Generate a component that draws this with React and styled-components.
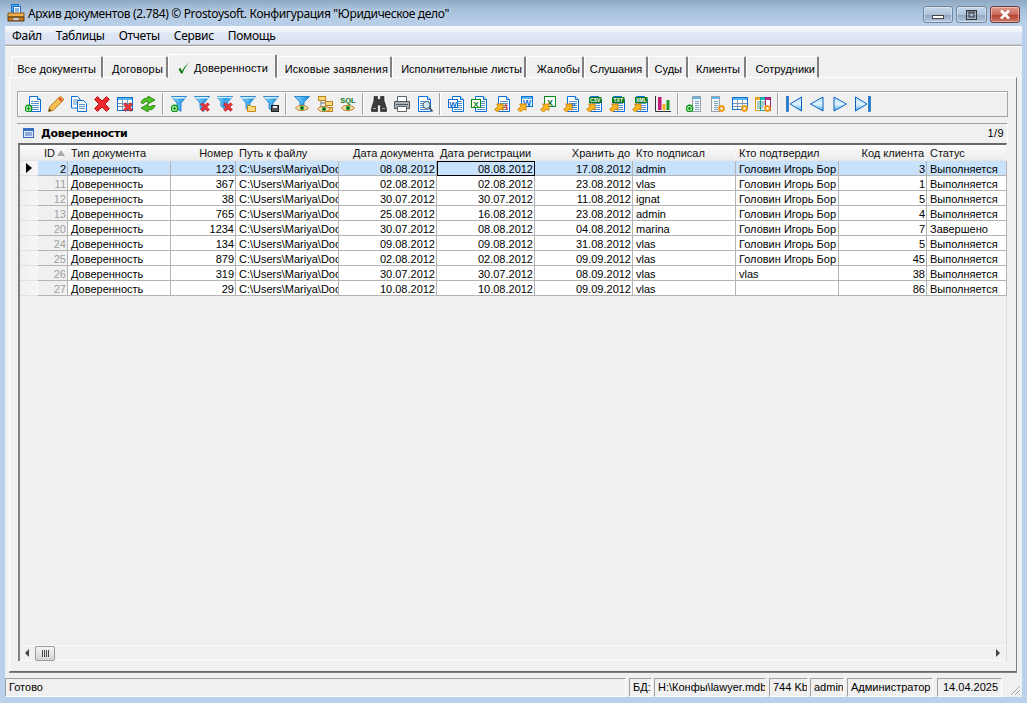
import React from "react";
import styled, { createGlobalStyle } from "styled-components";

const Global = createGlobalStyle`
  html, body { margin: 0; padding: 0; overflow: hidden; }
  body { font-family: "Liberation Sans", Arial, sans-serif; font-size: 11px; color: #000; }
`;

const Win = styled.div`
  width: 1027px; height: 703px; display: flex; flex-direction: column;
  background: #b9d1ea; box-sizing: border-box;
`;
const TitleBar = styled.div`
  height: 26px; flex: none; display: flex; align-items: center; padding: 0 7px 0 7px;
  background: linear-gradient(#8fa8c2, #a9c2dc 40%, #b9d1ea);
`;
const TitleText = styled.span`
  font: 12px "Noto Sans", "Liberation Sans", sans-serif; margin-left: 3px; color: #000; white-space: nowrap;
  text-shadow: 0 0 6px rgba(255,255,255,.6); letter-spacing: -0.34px;
`;
const WinButtons = styled.div`
  margin-left: auto; display: flex; gap: 3px; align-self: flex-start; margin-top: 6px;
`;
const WinBtn = styled.div`
  width: ${p => p.$w}px; height: 17px; box-sizing: border-box; border: 1px solid ${p => p.$close ? "#6e3a3a" : "#71859e"};
  border-radius: 3px; display: flex; align-items: center; justify-content: center;
  background: ${p => p.$close ? "linear-gradient(#e09a8c, #c8695a 50%, #b5402f 55%, #cc7a68)" : "linear-gradient(#c8d8ea, #aec3da 50%, #8fa8c4 55%, #b4c8de)"};
  box-shadow: inset 0 0 0 1px rgba(255,255,255,.4);
`;
const Client = styled.div`
  flex: 1; min-height: 0; margin: 0 5px 6px; background: #f0f0f0; display: flex; flex-direction: column;
`;
const MenuBar = styled.div`
  height: 18px; flex: none; display: flex; align-items: center; padding-left: 7px; gap: 14px;
  background: linear-gradient(#f7f9fd, #eef2fa 30%, #dfe6f4 40%, #dbe3f3);
  border-bottom: 1px solid #c8d0de;
  font: 12px "Noto Sans", "Liberation Sans", sans-serif; letter-spacing: -0.3px;
`;
const Rule = styled.div`
  height: 2px; flex: none; background: #ffffff; border-top: 1px solid #a8a8a0; box-sizing: border-box;
`;
const Body = styled.div`
  flex: 1; min-height: 0; padding: 8px 5px 6px 4px; display: flex; flex-direction: column;
`;
const Tabs = styled.div`
  display: flex; height: 23px; flex: none; padding-left: 2px; align-items: flex-end; position: relative; z-index: 1; margin-bottom: -1px;
`;
const Tab = styled.div`
  width: ${p => p.$w}px; height: ${p => p.$active ? 24 : 22}px; box-sizing: border-box; flex: none;
  display: flex; align-items: center; justify-content: flex-end; white-space: nowrap;
  background: #f0f0f0; border-top: 1px solid #fff; border-left: 1px solid #fff; border-right: 2px solid #808080;
  border-radius: 2px 2px 0 0; padding: 3px ${p => p.$pr}px 0 0; gap: 4px; letter-spacing: ${p => p.$ls || 0}px;
  ${p => p.$active ? "border-bottom: 1px solid #f0f0f0;" : "border-bottom:1px solid #fff;"}
`;
const Panel = styled.div`
  flex: 1; min-height: 0; box-sizing: border-box; display: flex; flex-direction: column;
  border: 1px solid; border-color: #fff #808080 #696969 #fff; box-shadow: 0 1px 0 #808080;
  padding: 13px 8px 10px 7px;
`;
const Toolbar = styled.div`
  height: 26px; flex: none; box-sizing: border-box; display: flex; align-items: center; padding-left: 3px;
  border: 1px solid #a6a69e; box-shadow: inset 1px 1px 0 #fff;
`;
const Tool = styled.div`
  width: 23px; height: 22px; flex: none; display: flex; align-items: center; justify-content: center;
`;
const Sep = styled.div`
  width: 8px; height: 22px; flex: none; display: flex; justify-content: center;
  &::after { content: ""; width: 1px; background: #a0a0a0; border-right: 1px solid #fff; }
`;
const Caption = styled.div`
  margin-top: 6px; height: 20px; flex: none; box-sizing: border-box; display: flex; align-items: center;
  padding: 0 3px 1px 6px; border-top: 1px solid #a0a0a0; border-right: 1px solid #fff;
`;
const CaptionTitle = styled.b`
  margin-left: 7px; font: bold 11px "DejaVu Sans", "Liberation Sans", sans-serif; letter-spacing: -0.35px;
`;
const CaptionCount = styled.span` margin-left: auto; letter-spacing: .4px; `;
const GridBox = styled.div`
  flex: 1; min-height: 0; box-sizing: border-box; margin-left: 1px; margin-right: 1px; display: flex; flex-direction: column;
  border-top: 2px solid #696969; border-left: 2px solid #808080; border-right: 1px solid #dcdcdc; background: #f0f0f0;
`;
const Table = styled.div` flex: 1; min-height: 0; `;
const Row = styled.div`
  display: grid; grid-template-columns: 18px 30px 103px 65px 103px 98px 98px 98px 103px 103px 88px 80px; height: 15px;
`;
const HeadRow = styled(Row)` height: 16px; `;
const Head = styled.div`
  display: flex; align-items: center; justify-content: ${p => p.$right ? "flex-end" : "flex-start"};
  padding: 0 ${p => p.$right ? 2 : 2}px 0 3px; white-space: nowrap; overflow: hidden; box-sizing: border-box;
  background: linear-gradient(#fdfdfd, #f4f4f4 50%, #ebebeb); border-bottom: 1px solid #e4e4e4; border-right: 1px solid #f4f4f4; color: #111;
`;
const Cell = styled.div`
  box-sizing: border-box; line-height: 14px; height: 15px; padding: 1px 1px 0 3px; overflow: hidden; white-space: nowrap;
  text-align: ${p => p.$right ? "right" : "left"};
  border-right: 1px solid #b4b4b4; border-bottom: 1px solid #b4b4b4;
  background: ${p => p.$bg || "#fff"}; color: ${p => p.$fg || "#000"};
  ${p => p.$focus ? "outline: 1px solid #000; outline-offset: -1px; background:#c8e2fc;" : ""}
`;
const Indicator = styled.div`
  box-sizing: border-box; height: 15px; display: flex; align-items: center; padding-left: 6px;
  background: linear-gradient(90deg, #f0f0f0, #f6f6f6); border-bottom: 1px solid #e2e2e2;
`;
const Arrow = styled.div`
  width: 0; height: 0; border-left: 6px solid #000; border-top: 5px solid transparent; border-bottom: 5px solid transparent;
`;
const SortMark = styled.span`
  width: 0; height: 0; margin-left: 2px; border-bottom: 6px solid #aaa; border-left: 4px solid transparent; border-right: 4px solid transparent;
`;
const ScrollBar = styled.div`
  height: 16px; flex: none; display: flex; align-items: center; position: relative; background: #f1f1f1;
  border-top: 1px solid #fafafa; border-bottom: 1px solid #fafafa; box-sizing: border-box;
`;
const ScrollArrow = styled.div`
  width: 0; height: 0; border-top: 4px solid transparent; border-bottom: 4px solid transparent;
  ${p => p.$right ? "border-left: 4px solid #444; margin: 0 6px 0 auto;" : "border-right: 4px solid #444; margin-left: 5px;"}
`;
const Thumb = styled.div`
  width: 20px; height: 15px; box-sizing: border-box; margin-left: 6px; border: 1px solid #9a9a9a; border-radius: 2px;
  background: linear-gradient(#f5f5f5, #e4e4e4 50%, #d2d2d2); display: flex; align-items: center; justify-content: center; gap: 1px;
`;
const Grip = styled.i` width: 1px; height: 7px; background: #444; `;
const Status = styled.div`
  height: 19px; flex: none; display: flex; position: relative; background: #f0f0f0;
`;
const StatusCell = styled.div`
  box-sizing: border-box; height: 19px; width: ${p => p.$w}px; margin-left: ${p => p.$gap || 0}px; flex: none; padding-left: ${p => p.$pad ?? 3}px; line-height: 16px; white-space: nowrap; overflow: hidden;
  border-top: 1px solid #a0a0a0; border-left: 1px solid #a0a0a0; border-right: 1px solid #fff; border-bottom: 1px solid #fff;
`;
const StatusGrip = styled.svg` position: absolute; right: 1px; bottom: 1px; `;

/* ---------- icons ---------- */
const I = ({ children }) => <svg width="16" height="16" viewBox="0 0 16 16">{children}</svg>;
const DocShape = ({ x = 3, w = 11 }) => (
  <g>
    <path d={`M${x + .5} .5h${w - 4}l3 3V15.500h-${w - 1}z`} fill="#fff" stroke="#0a6fd6" />
    <path d={`M${x + w - 3.500} .5v3h3`} fill="#bfe0fb" stroke="#0a6fd6" />
    <path d={`M${x + 2} 5.500h${w - 4}M${x + 2} 7.500h${w - 4}M${x + 2} 9.500h${w - 4}M${x + 2} 11.500h${w - 4}M${x + 2} 13.500h${w - 4}`} stroke="#5b93c8" />
  </g>
);
const Plus = ({ x = 0, y = 9 }) => (
  <g transform={`translate(${x} ${y})`}>
    <circle cx="3.500" cy="3.500" r="3.200" fill="#fff" stroke="#0a9a14" strokeWidth="1.400" />
    <path d="M3.500 1.500v4M1.500 3.500h4" stroke="#0a9a14" strokeWidth="1.400" />
  </g>
);
const RedX = ({ x = 8, y = 8, s = 1 }) => (
  <g transform={`translate(${x} ${y}) scale(${s})`}>
    <path d="M.5 2 2 .5 4 2.500 6 .5 7.500 2 5.500 4 7.500 6 6 7.500 4 5.500 2 7.500 .5 6 2.500 4z" fill="#e8343a" stroke="#a91f28" strokeWidth=".5" />
  </g>
);
const FunnelDefs = () => (
  <svg width="0" height="0" style={{ position: "absolute" }}>
    <defs>
      <linearGradient id="fg" x1="0" x2="1" y1="0" y2="0"><stop offset="0" stopColor="#8fd8fb" /><stop offset=".5" stopColor="#4cb2f0" /><stop offset="1" stopColor="#1186dc" /></linearGradient>
      <linearGradient id="tg" x1="0" x2="0" y1="0" y2="1"><stop offset="0" stopColor="#a8dcfa" /><stop offset=".5" stopColor="#e2f4fe" /><stop offset="1" stopColor="#4fa8e8" /></linearGradient>
    </defs>
  </svg>
);
const Funnel = ({ x = 0, scale = 1 }) => (
  <g transform={`translate(${x} 0) scale(${scale})`}>
    <path d="M.5 .5h15L10 7V15.500L6 12.500V7z" fill="url(#fg)" stroke="#1376c4" strokeWidth=".8" />
    <path d="M1.500 1h13v1.500h-13z" fill="#d8f2fe" />
  </g>
);
const Eye = ({ x = 1, y = 8 }) => (
  <g transform={`translate(${x} ${y})`}>
    <path d="M.5 4C3 .5 10 .5 13.500 4 10 7.500 3 7.500 .5 4z" fill="#f9e2b8" stroke="#c07a20" />
    <circle cx="7" cy="4" r="2.300" fill="#2fa43b" />
    <circle cx="7" cy="4" r="1" fill="#103a10" />
  </g>
);
const ArrowBadge = () => (
  <path d="M.5 13.500 4 10 2.500 8H9v6.500L7 13l-3.500 3z" fill="#f8b526" stroke="#c97808" strokeWidth=".8" />
);
const Gear = ({ x = 9, y = 9 }) => (
  <g transform={`translate(${x} ${y})`}>
    <circle cx="3.500" cy="3.500" r="2.300" fill="#fff" stroke="#f09a14" strokeWidth="2" />
    <path d="M3.500 0v1M3.500 6v1M0 3.500h1M6 3.500h1M1 1l.7.7M5.300 5.300 6 6M1 6l.7-.7M5.300 1.700 6 1" stroke="#f09a14" strokeWidth="1.200" />
  </g>
);
const Tag = ({ t, c = "#0b7a18" }) => (
  <g>
    <rect x="3" y="1" width="12.500" height="6" fill={c} />
    <text x="9.250" y="6" fontFamily="Liberation Sans" fontWeight="bold" fontSize="5" fill="#fff" textAnchor="middle">{t}</text>
  </g>
);
const GridShape = ({ h = 13, c = "#1070d0" }) => (
  <g>
    <rect x=".5" y="1.500" width="15" height={h} fill="#fff" stroke={c} />
    <path d="M1 2h14v2H1z" fill="#57b4f4" />
    <path d={`M1 7.500h14M1 10.500h14M5.500 4v${h - 3}M10.500 4v${h - 3}`} stroke="#7794b4" />
  </g>
);
const Column = ({ x = 6 }) => (
  <g>
    <rect x={x + .5} y=".5" width="8" height="15" fill="#f4f6f8" stroke="#98a0a8" />
    <path d={`M${x + 1} 1h7v2h-7z`} fill="#63b7ef" />
    <path d={`M${x + 3} 5.500h4M${x + 3} 7.500h4M${x + 3} 9.500h4M${x + 3} 11.500h4M${x + 3} 13.500h4`} stroke="#7da4c8" />
  </g>
);
const Tri = ({ d }) => (
  <path d={d} fill="url(#tg)" stroke="#0a62bc" strokeLinejoin="round" />
);

const icons = [
  <I><DocShape x={4} w={12} /><Plus /></I>,
  <I><path d="M.5 15.500 1.500 11 11.500 1q1-1 2 0l1.500 1.500q1 1 0 2L5 14.500z" fill="#f9c150" stroke="#b87514" /><path d="M11 2l3 3" stroke="#e14b36" strokeWidth="2" /><path d="M.5 15.500l1-3 2 2z" fill="#444" /></I>,
  <I><path d="M.5 .5h6l2.500 2.500v9H.5z" fill="#fff" stroke="#0a6fd6" /><path d="M2 4h5M2 6h5M2 8h5" stroke="#5b93c8" /><path d="M6.500 4.500h6l3 3v8h-9z" fill="#fff" stroke="#0a6fd6" /><path d="M8 8.500h6M8 10.500h6M8 12.500h6" stroke="#5b93c8" /></I>,
  <I><path d="M.5 3.500 3.500 .5 8 5 12.500 .5l3 3L11 8l4.500 4.500-3 3L8 11l-4.500 4.500-3-3L5 8z" fill="#ee2a2f" stroke="#c11e24" strokeLinejoin="round" /></I>,
  <I><GridShape /><RedX x={6} y={6} s={1.250} /></I>,
  <I><path d="M1 7Q2 2 8 2V0l7 4-7 4V5.500Q5 5 3.500 7.500z" fill="#4ac21f" stroke="#227c10" strokeWidth=".8" /><path d="M15 9.500Q14 14 8 14v2L1 12l7-4v2.500q3 .5 4.500-1z" fill="#4ac21f" stroke="#227c10" strokeWidth=".8" /></I>,
  "|",
  <I><Funnel /><Plus x={0} y={9} /></I>,
  <I><Funnel /><RedX x={6} y={6} s={1.250} /></I>,
  <I><Funnel x={2} scale={.875} /><Funnel x={-1} scale={.8} /><RedX x={6} y={6} s={1.250} /></I>,
  <I><Funnel /><path d="M7.500 9.500h3l1 1h4v5h-8z" fill="#fbd77e" stroke="#c58a1f" /></I>,
  <I><Funnel /><rect x="8.500" y="9.500" width="7" height="6" fill="#555" stroke="#222" /><rect x="10" y="10" width="4" height="2" fill="#eee" /></I>,
  "|",
  <I><path d="M.5 .5h15L10 6v3H6V6z" fill="url(#fg)" stroke="#1376c4" strokeWidth=".8" /><Eye x={1} y={8} /></I>,
  <I><rect x="1.500" y=".5" width="7" height="4" fill="#fbd77e" stroke="#b8861f" /><rect x="8.500" y="5.500" width="7" height="4" fill="#fbd77e" stroke="#b8861f" /><rect x="8.500" y="11.500" width="7" height="4" fill="#fbd77e" stroke="#b8861f" /><path d="M4 5v6h4M4 7h4" stroke="#777" fill="none" /><Eye x={0} y={9} /></I>,
  <I><text x="8" y="6.500" fontFamily="Liberation Sans" fontWeight="bold" fontSize="7.500" fill="#0c7a18" textAnchor="middle">SQL</text><Eye x={1} y={8} /></I>,
  "|",
  <I><path d="M3 .5h3.500v3h3v-3H13v4l2.500 8v3H9.500V9h-3v6.500H.5v-3l2.500-8z" fill="#3c3c3c" stroke="#1a1a1a" strokeWidth=".6" /><path d="M2 12.500h3M11 12.500h3" stroke="#aaa" /></I>,
  <I><path d="M3.500 .5h9v5h-9z" fill="#fff" stroke="#5b656e" /><path d="M.5 5.500h15v7H.5z" fill="#aab2b9" stroke="#4b555e" /><path d="M2 8.500h12" stroke="#4b555e" /><path d="M3.500 10.500h9v5h-9z" fill="#fff" stroke="#5b656e" /></I>,
  <I><DocShape x={1} w={13} /><circle cx="9.500" cy="9" r="3.500" fill="#cfeafc" stroke="#55606a" /><path d="M12 11.500l3.500 4" stroke="#44505a" strokeWidth="1.800" /></I>,
  "|",
  <I><DocShape x={4} w={12} /><rect x=".5" y="3.500" width="9" height="8" fill="#fff" stroke="#0a6fd6" /><text x="5" y="10.500" fontFamily="Liberation Sans" fontWeight="bold" fontSize="8" fill="#0a6fd6" textAnchor="middle">W</text></I>,
  <I><DocShape x={4} w={12} /><rect x=".5" y="3.500" width="9" height="8" fill="#fff" stroke="#0a8a1a" /><text x="5" y="10.500" fontFamily="Liberation Sans" fontWeight="bold" fontSize="8" fill="#0a8a1a" textAnchor="middle">X</text></I>,
  <I><DocShape x={4} w={12} /><text x="11.500" y="14" fontFamily="Liberation Serif" fontWeight="bold" fontStyle="italic" fontSize="9" fill="#d83a28" textAnchor="middle">A</text><ArrowBadge /></I>,
  <I><rect x="4.500" y=".5" width="11" height="10" fill="#fff" stroke="#0a6fd6" /><rect x="5" y="1" width="10" height="2" fill="#59b4f4" /><text x="10" y="10" fontFamily="Liberation Sans" fontWeight="bold" fontSize="9" fill="#0a6fd6" textAnchor="middle">W</text><ArrowBadge /></I>,
  <I><rect x="4.500" y=".5" width="11" height="10" fill="#fff" stroke="#0a8a1a" /><text x="10" y="9.500" fontFamily="Liberation Sans" fontWeight="bold" fontSize="9" fill="#0a6a14" textAnchor="middle">X</text><ArrowBadge /></I>,
  <I><DocShape x={4} w={12} /><text x="10" y="12" fontFamily="Liberation Serif" fontWeight="bold" fontSize="11" fill="#1a6fd0" textAnchor="middle">e</text><ArrowBadge /></I>,
  <I><DocShape x={4} w={12} /><Tag t="CSV" /><ArrowBadge /></I>,
  <I><DocShape x={4} w={12} /><Tag t="TXT" /><ArrowBadge /></I>,
  <I><DocShape x={4} w={12} /><Tag t="XML" /><ArrowBadge /></I>,
  <I><path d="M.5 0v15.500H16" fill="none" stroke="#333" strokeWidth="1" /><rect x="3" y="1" width="3.500" height="13" fill="#c2187a" /><rect x="7.500" y="8" width="3" height="6" fill="#f3b21c" /><rect x="11.500" y="4" width="3" height="10" fill="#1f9a2a" /></I>,
  "|",
  <I><Column /><Plus x={0} y={9} /></I>,
  <I><Column x={2} /><Gear /></I>,
  <I><GridShape h={12} /><Gear /></I>,
  <I><rect x=".5" y="1.500" width="5" height="13" fill="#fff" stroke="#e09a14" /><rect x="5.500" y="1.500" width="5" height="13" fill="#fff" stroke="#12a0a0" /><rect x="10.500" y="1.500" width="5" height="13" fill="#fff" stroke="#a0207c" /><path d="M1 2h4v2H1z" fill="#f0b030" /><path d="M6 2h4v2H6z" fill="#20b8b8" /><path d="M11 2h4v2h-4z" fill="#b0308c" /><path d="M2 6h8M2 8h8M2 10h7M2 12h6" stroke="#4a9a8a" /><Gear /></I>,
  "|",
  <I><rect x=".5" y=".5" width="2" height="15" fill="#1a7ed0" stroke="#0a5fb4" strokeWidth=".6" /><Tri d="M15.500 1v14L4 8z" /></I>,
  <I><Tri d="M14 1v14L1.500 8z" /></I>,
  <I><Tri d="M2 1v14L14.500 8z" /></I>,
  <I><Tri d="M.5 1v14L12 8z" /><rect x="13.500" y=".5" width="2" height="15" fill="#1a7ed0" stroke="#0a5fb4" strokeWidth=".6" /></I>,
];

const tabs = [
  { t: "Все документы", w: 92, pr: 5, ls: .1 },
  { t: "Договоры", w: 65, pr: 3, ls: .2 },
  { t: "Доверенности", w: 109, pr: 7, ls: .1, active: true },
  { t: "Исковые заявления", w: 115, pr: 2, ls: .15 },
  { t: "Исполнительные листы", w: 134, pr: 2 },
  { t: "Жалобы", w: 58, pr: 2 },
  { t: "Слушания", w: 64, pr: 4, ls: -.1 },
  { t: "Суды", w: 40, pr: 4 },
  { t: "Клиенты", w: 58, pr: 4 },
  { t: "Сотрудники", w: 73, pr: 2 },
];
const rows = [
  [2, 123, "08.08.2012", "08.08.2012", "17.08.2012", "admin", "Головин Игорь Бор", 3, "Выполняется"],
  [11, 367, "02.08.2012", "02.08.2012", "23.08.2012", "vlas", "Головин Игорь Бор", 1, "Выполняется"],
  [12, 38, "30.07.2012", "30.07.2012", "11.08.2012", "ignat", "Головин Игорь Бор", 5, "Выполняется"],
  [13, 765, "25.08.2012", "16.08.2012", "23.08.2012", "admin", "Головин Игорь Бор", 4, "Выполняется"],
  [20, 1234, "30.07.2012", "08.08.2012", "04.08.2012", "marina", "Головин Игорь Бор", 7, "Завершено"],
  [24, 134, "09.08.2012", "09.08.2012", "31.08.2012", "vlas", "Головин Игорь Бор", 5, "Выполняется"],
  [25, 879, "02.08.2012", "02.08.2012", "09.09.2012", "vlas", "Головин Игорь Бор", 45, "Выполняется"],
  [26, 319, "30.07.2012", "30.07.2012", "08.09.2012", "vlas", "vlas", 38, "Выполняется"],
  [27, 29, "10.08.2012", "10.08.2012", "09.09.2012", "vlas", "", 86, "Выполняется"],
];

export default function App() {
  return (
    <Win>
      <Global />
      <FunnelDefs />
      <TitleBar>
        <svg width="18" height="18" viewBox="0 0 18 18">
          <rect x="4.500" y=".5" width="7" height="7" fill="#4db4ec" stroke="#1a6fd0" />
          <rect x="6.500" y="2.500" width="7" height="7" fill="#fff" stroke="#1a6fd0" />
          <path d="M8 5h4M8 7h4" stroke="#1a6fd0" />
          <path d="M1 9h16v4H1z" fill="#f0ae48" stroke="#7a5420" />
          <path d="M1 13h16v4H1z" fill="#c87a20" stroke="#5a3a14" />
          <rect x="6" y="14" width="6" height="2" fill="#fff" stroke="#555" strokeWidth=".5" />
        </svg>
        <TitleText>Архив документов (2.784) © Prostoysoft. Конфигурация "Юридическое дело"</TitleText>
        <WinButtons>
          <WinBtn $w={30}><svg width="12" height="8" viewBox="0 0 12 8"><rect x=".5" y="4.500" width="11" height="3" fill="#fff" stroke="#444" /></svg></WinBtn>
          <WinBtn $w={31}><svg width="11" height="10" viewBox="0 0 11 10"><rect x=".5" y=".5" width="10" height="9" fill="none" stroke="#333" /><rect x="3" y="3" width="5" height="4" fill="none" stroke="#333" /><rect x="1.500" y="1.500" width="8" height="1" fill="#333" /></svg></WinBtn>
          <WinBtn $w={30} $close><svg width="12" height="11" viewBox="0 0 12 11"><path d="M2 1.500l8 8M10 1.500l-8 8" stroke="#fff" strokeWidth="2.600" /></svg></WinBtn>
        </WinButtons>
      </TitleBar>
      <Client>
        <MenuBar>
          <span>Файл</span><span>Таблицы</span><span>Отчеты</span><span>Сервис</span><span>Помощь</span>
        </MenuBar>
        <Rule />
        <Body>
          <Tabs>
            {tabs.map(({ t, w, pr, ls, active }) => (
              <Tab key={t} $w={w} $pr={pr} $ls={ls} $active={active}>
                {active && <svg width="12" height="12" viewBox="0 0 12 12"><path d="M.5 7 2.500 6l1.500 3C5.500 6 8 3 11.500 .5 8.500 3.500 6 7 4.500 11.500H3z" fill="#0a7a14" /></svg>}
                {t}
              </Tab>
            ))}
          </Tabs>
          <Panel>
            <Toolbar>
              {icons.map((ic, i) => ic === "|" ? <Sep key={i} /> : <Tool key={i}>{ic}</Tool>)}
            </Toolbar>
            <Caption>
              <svg width="11" height="10" viewBox="0 0 11 10"><rect x=".5" y=".5" width="10" height="9" fill="#dfe9f8" stroke="#3a6fc0" /><path d="M1 1h9v2H1z" fill="#3a6fc0" /><path d="M2 5h7M2 7h7" stroke="#3a6fc0" /></svg>
              <CaptionTitle>Доверенности</CaptionTitle>
              <CaptionCount>1/9</CaptionCount>
            </Caption>
            <GridBox>
              <Table>
                <HeadRow>
                  <Head />
                  <Head $right>ID<SortMark /></Head>
                  <Head>Тип документа</Head>
                  <Head $right>Номер</Head>
                  <Head>Путь к файлу</Head>
                  <Head $right>Дата документа</Head>
                  <Head>Дата регистрации</Head>
                  <Head $right>Хранить до</Head>
                  <Head>Кто подписал</Head>
                  <Head>Кто подтвердил</Head>
                  <Head $right>Код клиента</Head>
                  <Head>Статус</Head>
                </HeadRow>
                {rows.map((r, i) => {
                  const bg = i === 0 ? "#c8e2fc" : undefined;
                  return (
                    <Row key={r[0]}>
                      <Indicator>{i === 0 && <Arrow />}</Indicator>
                      <Cell $right $bg={bg || "#f0f0f0"} $fg={i === 0 ? "#000" : "#a0a0a0"}>{r[0]}</Cell>
                      <Cell $bg={bg}>Доверенность</Cell>
                      <Cell $right $bg={bg}>{r[1]}</Cell>
                      <Cell $bg={bg}>C:\Users\Mariya\Documents</Cell>
                      <Cell $right $bg={bg}>{r[2]}</Cell>
                      <Cell $right $bg={bg} $focus={i === 0}>{r[3]}</Cell>
                      <Cell $right $bg={bg}>{r[4]}</Cell>
                      <Cell $bg={bg}>{r[5]}</Cell>
                      <Cell $bg={bg}>{r[6]}</Cell>
                      <Cell $right $bg={bg}>{r[7]}</Cell>
                      <Cell $bg={bg}>{r[8]}</Cell>
                    </Row>
                  );
                })}
              </Table>
              <ScrollBar>
                <ScrollArrow />
                <Thumb><Grip /><Grip /><Grip /><Grip /></Thumb>
                <ScrollArrow $right />
              </ScrollBar>
            </GridBox>
          </Panel>
        </Body>
        <Status>
          <StatusCell $w={621}>Готово</StatusCell>
          <StatusCell $w={23} $gap={3}>БД:</StatusCell>
          <StatusCell $w={112} $gap={2}>H:\Конфы\lawyer.mdb</StatusCell>
          <StatusCell $w={39} $gap={3}>744 Kb</StatusCell>
          <StatusCell $w={34} $gap={2}>admin</StatusCell>
          <StatusCell $w={86} $gap={3}>Администратор</StatusCell>
          <StatusCell $w={65} $gap={4} $pad={5}>14.04.2025</StatusCell>
          <StatusGrip width="12" height="12" viewBox="0 0 12 12"><path d="M11 2 2 11M11 6 6 11M11 10 10 11" stroke="#a8a8a8" /></StatusGrip>
        </Status>
      </Client>
    </Win>
  );
}
